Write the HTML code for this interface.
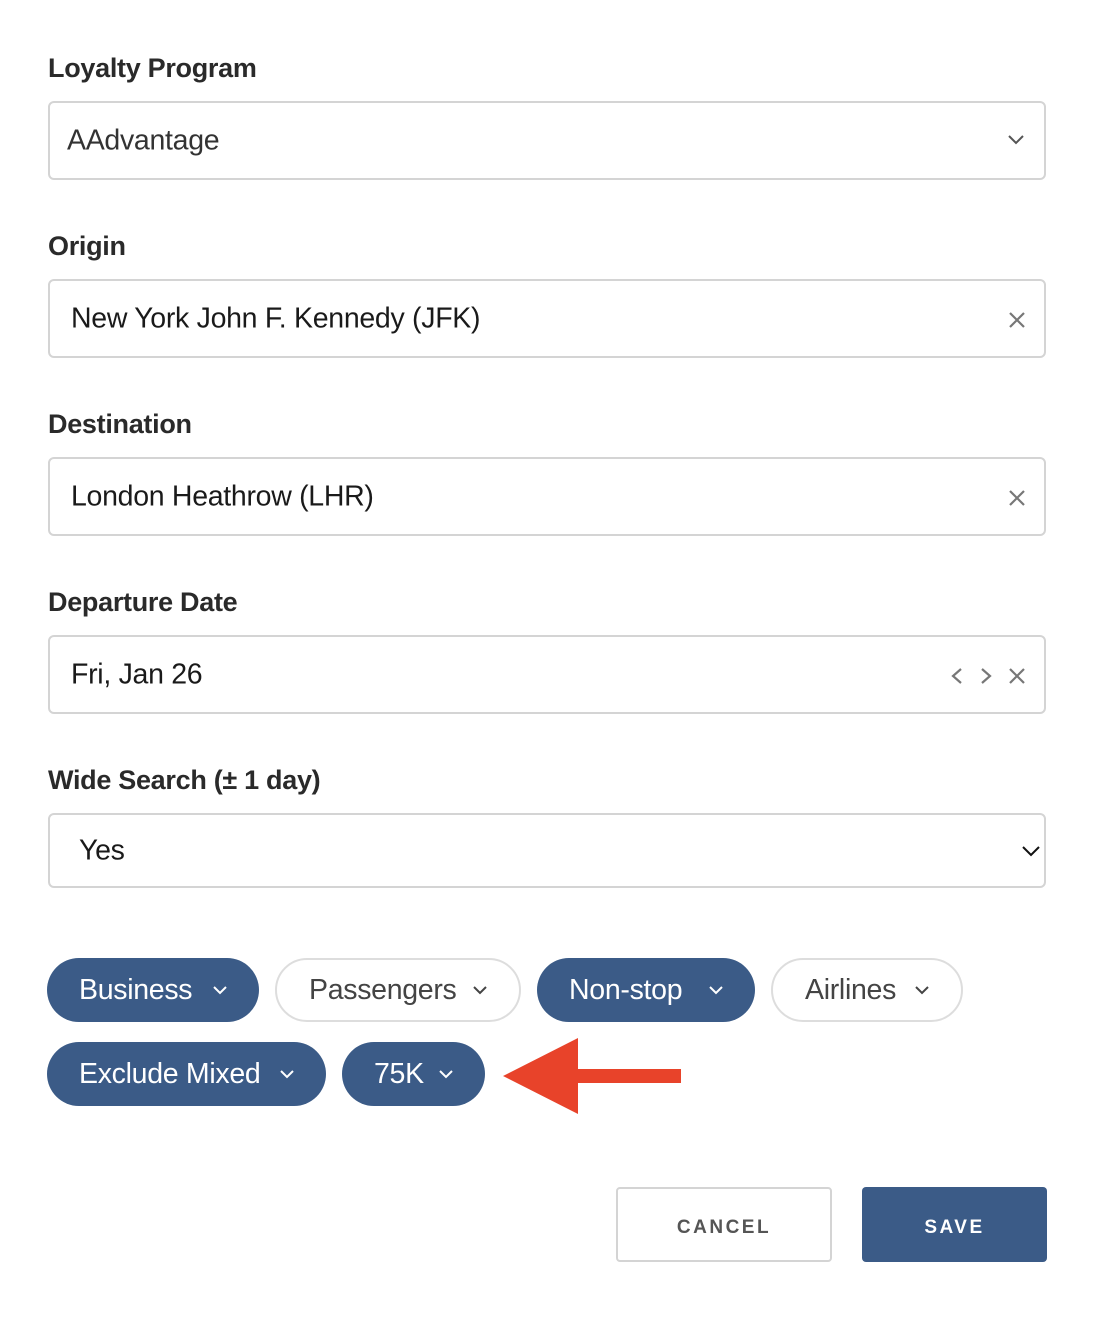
<!DOCTYPE html><html><head><style>
body{margin:0;width:1094px;height:1322px;background:#fff;font-family:"Liberation Sans",sans-serif;position:relative;overflow:hidden;color:#222}
.l{position:absolute;left:48px;font-size:27px;font-weight:bold;color:#2a2a2a;letter-spacing:-0.3px}
.f{position:absolute;left:48px;width:998px;border:2px solid #d4d4d4;border-radius:6px;box-sizing:border-box;font-size:28.5px;color:#1a1a1a;letter-spacing:-0.3px}
.f span{position:absolute;top:50%;transform:translateY(-50%)}
.p{position:absolute;height:64px;border-radius:32px;box-sizing:border-box;font-size:28.5px;line-height:64px;padding-left:32px;background:#3b5b87;color:#fff;letter-spacing:-0.3px}
.p.w{background:#fff;border:2px solid #ddd;color:#444;line-height:60px}
svg{position:absolute}
</style></head><body>
<div class="l" style="top:53px">Loyalty Program</div>
<div class="f" style="top:101px;height:79px"><span style="left:17px;color:#333">AAdvantage</span>
<svg style="left:958px;top:32px" width="16" height="10" viewBox="0 0 16 10"><path d="M1 1l7 7 7-7" fill="none" stroke="#555" stroke-width="2"/></svg></div>
<div class="l" style="top:231px">Origin</div>
<div class="f" style="top:279px;height:79px"><span style="left:21px">New York John F. Kennedy (JFK)</span>
<svg style="left:958px;top:30px" width="18" height="18"><path d="M2 2l14 14M16 2L2 16" stroke="#777" stroke-width="2.2"/></svg></div>
<div class="l" style="top:409px">Destination</div>
<div class="f" style="top:457px;height:79px"><span style="left:21px">London Heathrow (LHR)</span>
<svg style="left:958px;top:30px" width="18" height="18"><path d="M2 2l14 14M16 2L2 16" stroke="#777" stroke-width="2.2"/></svg></div>
<div class="l" style="top:587px">Departure Date</div>
<div class="f" style="top:635px;height:79px"><span style="left:21px">Fri, Jan 26</span>
<svg style="left:900px;top:30px" width="80" height="18"><path d="M11 2L3 9l8 7" fill="none" stroke="#777" stroke-width="2.2"/><path d="M32 2l8 7-8 7" fill="none" stroke="#777" stroke-width="2.2"/><path d="M60 2l14 14M74 2L60 16" stroke="#777" stroke-width="2.2"/></svg></div>
<div class="l" style="top:765px">Wide Search (± 1 day)</div>
<div class="f" style="top:813px;height:75px"><span style="left:29px">Yes</span>
<svg style="left:972px;top:31px" width="18" height="11"><path d="M1 1l8 8 8-8" fill="none" stroke="#111" stroke-width="2"/></svg></div>
<div class="p" style="left:47px;top:958px;width:212px">Business <svg style="right:32px;top:28px" width="14" height="9"><path d="M1 1l6 6 6-6" fill="none" stroke="#fff" stroke-width="2"/></svg></div>
<div class="p w" style="left:275px;top:958px;width:246px">Passengers <svg style="right:32px;top:26px" width="14" height="9"><path d="M1 1l6 6 6-6" fill="none" stroke="#444" stroke-width="2"/></svg></div>
<div class="p" style="left:537px;top:958px;width:218px">Non-stop <svg style="right:32px;top:28px" width="14" height="9"><path d="M1 1l6 6 6-6" fill="none" stroke="#fff" stroke-width="2"/></svg></div>
<div class="p w" style="left:771px;top:958px;width:192px">Airlines <svg style="right:32px;top:26px" width="14" height="9"><path d="M1 1l6 6 6-6" fill="none" stroke="#444" stroke-width="2"/></svg></div>
<div class="p" style="left:47px;top:1042px;width:279px">Exclude Mixed <svg style="right:32px;top:28px" width="14" height="9"><path d="M1 1l6 6 6-6" fill="none" stroke="#fff" stroke-width="2"/></svg></div>
<div class="p" style="left:342px;top:1042px;width:143px">75K <svg style="right:32px;top:28px" width="14" height="9"><path d="M1 1l6 6 6-6" fill="none" stroke="#fff" stroke-width="2"/></svg></div>
<svg style="left:503px;top:1038px" width="180" height="76"><path d="M0 38L75 0V31H178V45H75V76Z" fill="#e8432a"/></svg>
<div style="position:absolute;left:616px;top:1187px;width:216px;height:75px;border:2px solid #d4d4d4;border-radius:4px;box-sizing:border-box;text-align:center;line-height:78px;font-weight:bold;font-size:19px;letter-spacing:2.5px;color:#555">CANCEL</div>
<div style="position:absolute;left:862px;top:1187px;width:185px;height:75px;background:#3b5b87;border-radius:4px;text-align:center;line-height:81px;font-weight:bold;font-size:19px;letter-spacing:2.5px;color:#fff">SAVE</div>
</body></html>
